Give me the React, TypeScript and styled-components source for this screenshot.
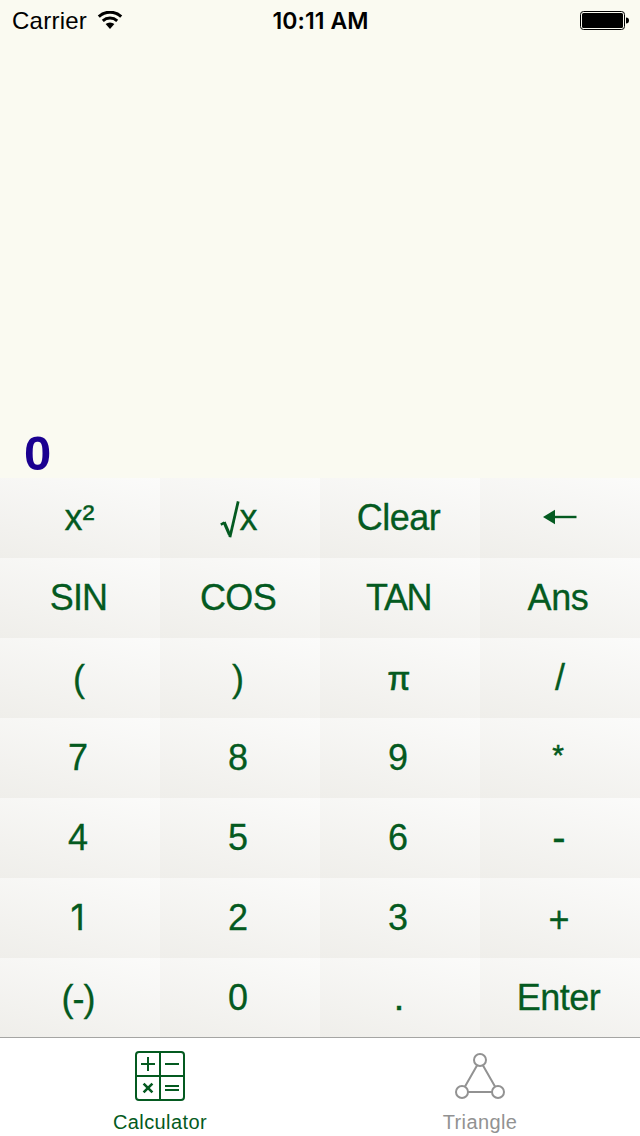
import React from 'react';
import styled, { createGlobalStyle } from 'styled-components';

const green = '#045a20';
const grey = '#929292';

const GlobalStyle = createGlobalStyle`
  body { margin: 0; background: #fafaf1; }
  * { box-sizing: border-box; }
`;

const Screen = styled.div`
  width: 640px;
  height: 1136px;
  display: flex;
  flex-direction: column;
  background: #fafaf1;
  font-family: 'Liberation Sans', Arial, sans-serif;
  overflow: hidden;
`;

const StatusBar = styled.header`
  height: 40px;
  flex: none;
  display: grid;
  grid-template-columns: 1fr auto 1fr;
  align-items: center;
  padding: 2px 11px 0 12px;
  color: #000;
`;

const Carrier = styled.div`
  display: flex;
  align-items: center;
  gap: 10px;
  font-size: 24px;
  line-height: 38px;
  letter-spacing: 0.25px;
  svg { display: block; margin-top: -3px; }
`;

const Time = styled.time`
  font: 600 23px/38px Inter, sans-serif;
  letter-spacing: 0.1px;
`;

const Battery = styled.svg`
  display: block;
  justify-self: end;
  margin-top: -2px;
`;

const Display = styled.output`
  flex: 1;
  display: flex;
  align-items: flex-end;
  padding: 0 24px 1px;
  color: #1a0090;
  font-size: 49px;
  font-weight: 700;
  line-height: 48px;
`;

const Keypad = styled.main`
  flex: none;
  height: 559px;
  display: grid;
  grid-template-columns: repeat(4, 160px);
  grid-template-rows: repeat(6, 80px) 79px;
`;

type KeyProps = { $spacing?: number; $inter?: boolean; $right?: number; $top?: number; $size?: number; $stroke?: number };

const Key = styled.button<KeyProps>`
  display: flex;
  align-items: flex-start;
  justify-content: center;
  margin: 0;
  border: 0;
  padding: ${(p) => p.$top ?? 20}px ${(p) => p.$right ?? 4}px 0 0;
  background: linear-gradient(15deg, #efeeea, #fbfbfa);
  color: ${green};
  font-family: ${(p) => (p.$inter ? "Inter, 'Liberation Sans', sans-serif" : "'Liberation Sans', Arial, sans-serif")};
  font-size: ${(p) => p.$size ?? 36}px;
  line-height: 40px;
  letter-spacing: ${(p) => p.$spacing ?? 0}px;
  -webkit-text-stroke: ${(p) => p.$stroke ?? 0.3}px ${green};
  svg { display: block; }
`;

const TabBar = styled.nav`
  flex: none;
  height: 99px;
  display: flex;
  background: #fff;
  border-top: 1px solid #a5a5a3;
`;

const Tab = styled.a<{ $active?: boolean }>`
  flex: 1;
  display: flex;
  flex-direction: column;
  align-items: center;
  padding-top: 13px;
  gap: 8px;
  font-size: 20px;
  line-height: 26px;
  letter-spacing: 0.4px;
  color: ${(p) => (p.$active ? green : grey)};
  svg { display: block; }
`;

const WifiIcon = () => (
  <svg width="26" height="18" viewBox="0 0 26 18" fill="none" stroke="#000" strokeWidth="3">
    <path d="M1.8 5.6a16.4 16.4 0 0 1 22.4 0" />
    <path d="M5.8 9.8a10.8 10.8 0 0 1 14.4 0" />
    <path d="M13 18 8.6 13a6.8 6.8 0 0 1 8.8 0z" fill="#000" stroke="none" />
  </svg>
);

const BatteryIcon = () => (
  <Battery width="49" height="19" viewBox="0 0 49 19">
    <rect x="0.5" y="0.5" width="44" height="18" rx="3" fill="none" stroke="#000" />
    <rect x="2" y="2" width="41" height="15" rx="1.5" />
    <path d="M46 6.5c2 0 3 1.2 3 3s-1 3-3 3z" />
  </Battery>
);

const RootIcon = () => (
  <svg width="20" height="40" viewBox="0 0 20 40" fill="none" stroke={green}>
    <path d="M0.8 26.6 4.4 24.6" strokeWidth="2.4" />
    <path d="M4.1 24.2 9.7 37.2" strokeWidth="3.2" />
    <path d="M9.9 39.2 18.2 3.4" strokeWidth="2.8" />
  </svg>
);

const ArrowIcon = () => (
  <svg width="34" height="40" viewBox="0 0 34 40" fill={green}>
    <path d="M0 19 12 11.8v14.4z" />
    <path d="M11 17.8h22.5v2.4H11z" />
  </svg>
);

const CalculatorIcon = () => (
  <svg width="50" height="50" viewBox="0 0 50 50" fill="none" stroke={green} strokeWidth="2">
    <rect x="1" y="1" width="48" height="48" rx="3" />
    <path d="M25 1v48M1 25h48M6 13h14M13 6v14M30 13h14M30 35h14M30 39h14" />
    <path d="m8.6 32.6 8.8 8.8M17.4 32.6l-8.8 8.8" strokeWidth="2.6" />
  </svg>
);

const TriangleIcon = () => (
  <svg width="50" height="50" viewBox="0 0 50 50" fill="none" stroke={grey} strokeWidth="2">
    <circle cx="25" cy="9" r="6" />
    <circle cx="7" cy="41" r="6" />
    <circle cx="43" cy="41" r="6" />
    <path d="m22 14.5-12 21M28 14.5l12 21M13 41h24" />
  </svg>
);

const keys: (KeyProps & { label: React.ReactNode })[] = [
  { label: 'x²', $right: 1 },
  { label: <><RootIcon />x</>, $right: 3 },
  { label: 'Clear', $spacing: -0.5, $right: 3 },
  { label: <ArrowIcon />, $right: 0 },
  { label: 'SIN', $spacing: -0.8, $right: 3 },
  { label: 'COS', $spacing: -0.6, $right: 4 },
  { label: 'TAN', $spacing: -1.5, $right: 3 },
  { label: 'Ans', $spacing: -0.3, $right: 4 },
  { label: '(', $top: 21, $right: 2 },
  { label: ')', $top: 21, $right: 4 },
  { label: 'π', $right: 2, $top: 21, $size: 33, $stroke: 0.7 },
  { label: '/', $right: 0, $top: 20 },
  { label: '7', $right: 4 }, { label: '8' }, { label: '9' },
  { label: '*', $size: 30, $top: 17, $stroke: 0.5 },
  { label: '4', $right: 4 }, { label: '5' }, { label: '6' },
  { label: '-', $right: 2, $size: 40, $top: 19 },
  { label: '1', $inter: true, $size: 35, $right: 5, $top: 19, $stroke: 0.3 }, { label: '2' }, { label: '3' },
  { label: '+', $right: 2, $top: 22 },
  { label: '(-)', $spacing: -1, $top: 21, $right: 4 },
  { label: '0' },
  { label: '.', $right: 2, $stroke: 0.7 },
  { label: 'Enter', $spacing: -0.5, $right: 3 },
];

export default function App() {
  return (
    <Screen>
      <GlobalStyle />
      <StatusBar>
        <Carrier>Carrier <WifiIcon /></Carrier>
        <Time>10:11 AM</Time>
        <BatteryIcon />
      </StatusBar>
      <Display>0</Display>
      <Keypad>
        {keys.map(({ label, ...style }, i) => (
          <Key key={i} {...style}>{label}</Key>
        ))}
      </Keypad>
      <TabBar>
        <Tab $active><CalculatorIcon />Calculator</Tab>
        <Tab><TriangleIcon />Triangle</Tab>
      </TabBar>
    </Screen>
  );
}
